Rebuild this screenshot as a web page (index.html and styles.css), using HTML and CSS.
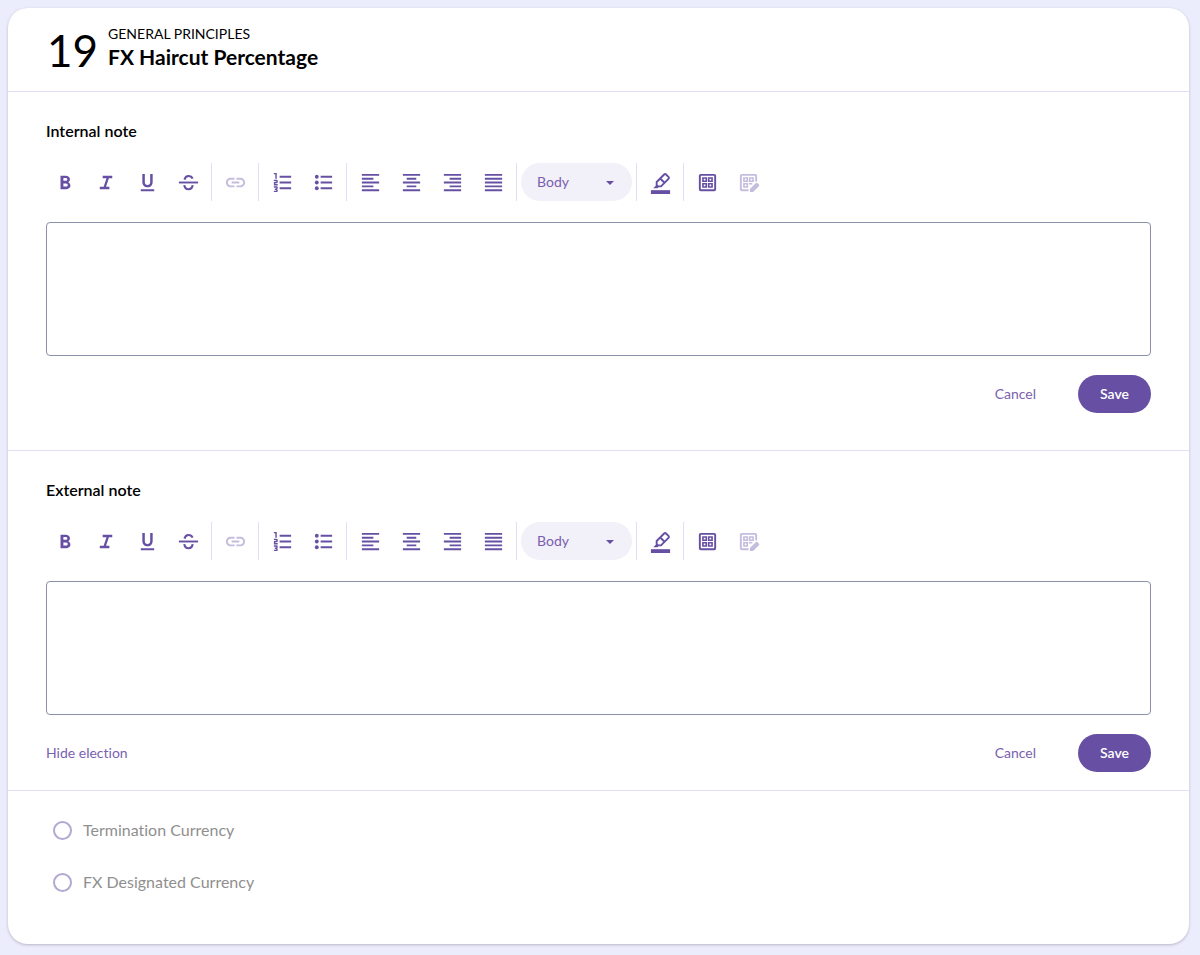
FILE: index.html
```html
<!DOCTYPE html>
<html lang="en">
<head>
    <meta charset="UTF-8">
    <meta name="viewport" content="width=device-width, initial-scale=1.0">
    <title>FX Haircut Percentage</title>
    <link rel="stylesheet" href="styles.css">
</head>
<body>

    <svg class="icon-defs" aria-hidden="true">
        <symbol id="bold" viewBox="0 0 24 24"><path d="M6.800 19V5h5.500c1.100 0 2.100.3 3 1s1.300 1.600 1.300 2.800c0 .8-.2 1.500-.6 2s-.7.800-1.100 1c.5.200 1 .6 1.500 1.200s.7 1.300.7 2.200c0 1.400-.5 2.300-1.500 2.900s-1.900.9-2.800.9H6.800zm3-2.800h2.700c.8 0 1.300-.2 1.500-.6s.3-.7.300-1-.1-.6-.3-1-.7-.6-1.500-.6H9.800v3.200zm0-5.900h2.400c.6 0 1-.1 1.300-.4s.4-.7.400-1.100-.2-.8-.5-1-.7-.4-1.200-.4H9.800v2.900z"/></symbol>
        <symbol id="italic" viewBox="0 0 24 24"><path d="M5 19v-2.500h4l3-9H8V5h10v2.500h-3.500l-3 9H15V19z"/></symbol>
        <symbol id="underline" viewBox="0 0 24 24"><path d="M5 21v-2h14v2H5zm7-4c-1.700 0-3-.5-4-1.600-.9-1-1.400-2.400-1.400-4.100V3h2.600v8.400c0 .9.200 1.700.7 2.300s1.200.8 2.100.8 1.600-.3 2.100-.8.700-1.400.7-2.300V3h2.600v8.300c0 1.700-.5 3.100-1.400 4.100-1 1.100-2.300 1.600-4 1.600z"/></symbol>
        <symbol id="strike" viewBox="0 0 24 24"><path d="M2 11h20v2H2z"/><path fill="none" stroke="currentColor" stroke-width="2.200" d="M7.800 9C8.500 6.500 10 5.200 12 5.200S15.500 6.300 16.300 8M7.600 14.800c.3 2.600 1.900 4.200 4.400 4.200s4.100-1.500 4.300-4.200"/></symbol>
        <symbol id="link" viewBox="0 0 24 24"><path d="M11 17H7c-2.800 0-5-2.200-5-5s2.200-5 5-5h4v2H7c-1.700 0-3 1.300-3 3s1.300 3 3 3h4v2zm-3-4v-2h8v2H8zm5 4v-2h4c1.700 0 3-1.300 3-3s-1.300-3-3-3h-4V7h4c2.800 0 5 2.200 5 5s-2.200 5-5 5h-4z"/></symbol>
        <symbol id="numbers" viewBox="0 0 24 24"><path d="M3 22v-1.500h2.500v-.75H4v-1.500h1.500v-.75H3V16h3q.425 0 .713.288T7 17v1q0 .425-.288.713T6 19q.425 0 .713.288T7 20v1q0 .425-.288.713T6 22H3zm0-7v-2.750q0-.425.288-.713T4 11.250h1.500v-.75H3V9h3q.425 0 .713.288T7 10v1.750q0 .425-.288.713T6 12.750H4.500v.75H7V15H3zm1.500-7V3.500H3V2h3v6H4.500zM9 19v-2h12v2H9zm0-6v-2h12v2H9zm0-6V5h12v2H9z"/></symbol>
        <symbol id="bullets" viewBox="0 0 24 24"><path d="M9 19v-2h12v2H9zm0-6v-2h12v2H9zm0-6V5h12v2H9z"/><circle cx="5" cy="6" r="2"/><circle cx="5" cy="12" r="2"/><circle cx="5" cy="18" r="2"/></symbol>
        <symbol id="left" viewBox="0 0 24 24"><path d="M3 3h18v2H3zM3 7h12v2H3zM3 11h18v2H3zM3 15h12v2H3zM3 19h18v2H3z"/></symbol>
        <symbol id="center" viewBox="0 0 24 24"><path d="M3 3h18v2H3zM7 7h10v2H7zM3 11h18v2H3zM7 15h10v2H7zM3 19h18v2H3z"/></symbol>
        <symbol id="right" viewBox="0 0 24 24"><path d="M3 3h18v2H3zM9 7h12v2H9zM3 11h18v2H3zM9 15h12v2H9zM3 19h18v2H3z"/></symbol>
        <symbol id="justify" viewBox="0 0 24 24"><path d="M3 3h18v2H3zM3 7h18v2H3zM3 11h18v2H3zM3 15h18v2H3zM3 19h18v2H3z"/></symbol>
        <symbol id="highlight" viewBox="0 0 24 24"><path d="M2 20h20v4H2z"/><path fill="none" stroke="currentColor" stroke-width="2" stroke-linejoin="round" d="M8 11.500l7.800-7.800q1-1 2 0l2.500 2.500q1 1 0 2L12.500 16H9.300L8 14.700zM11.700 7.800l4.500 4.500"/><path d="M4.500 18l3.700-4 2.300 2.300L8.800 18z"/></symbol>
        <symbol id="table" viewBox="0 0 24 24"><path fill="none" stroke="currentColor" stroke-width="2" d="M5 4h14q1 0 1 1v14q0 1-1 1H5q-1 0-1-1V5q0-1 1-1z"/><path fill="none" stroke="currentColor" stroke-width="1.700" d="M7.250 7.250h3.500v3.500h-3.500zM13.250 7.250h3.500v3.500h-3.500zM7.250 13.250h3.500v3.500h-3.500zM13.250 13.250h3.500v3.500h-3.500z"/></symbol>
        <symbol id="table-edit" viewBox="0 0 24 24"><path fill="none" stroke="currentColor" stroke-width="2" d="M20 11V5q0-1-1-1H5q-1 0-1 1v14q0 1 1 1h7"/><path fill="none" stroke="currentColor" stroke-width="1.700" d="M7.250 7.250h3.500v3.500h-3.500zM13.250 7.250h3.500v3.500h-3.500zM7.250 13.250h3.500v3.500h-3.500zM13.250 14v-.75H16"/><path d="M13.500 22v-3.300l6-6q1-1 2 0l1.300 1.300q1 1 0 2l-6 6z"/></symbol>
    </svg>

    <main class="card">
        <header class="card-header">
            <span class="number">19</span>
            <div>
                <p class="category">GENERAL PRINCIPLES</p>
                <h1>FX Haircut Percentage</h1>
            </div>
        </header>

        <section class="note">
            <h2 id="internalTitle">Internal note</h2>
            <div class="toolbar">
                <div class="group">
                    <button aria-label="Bold"><svg><use href="#bold"/></svg></button>
                    <button aria-label="Italic"><svg><use href="#italic"/></svg></button>
                    <button aria-label="Underline"><svg><use href="#underline"/></svg></button>
                    <button aria-label="Strikethrough"><svg><use href="#strike"/></svg></button>
                </div>
                <div class="group">
                    <button aria-label="Link" disabled><svg><use href="#link"/></svg></button>
                </div>
                <div class="group">
                    <button aria-label="Numbered list"><svg><use href="#numbers"/></svg></button>
                    <button aria-label="Bulleted list"><svg><use href="#bullets"/></svg></button>
                </div>
                <div class="group">
                    <button aria-label="Align left"><svg><use href="#left"/></svg></button>
                    <button aria-label="Align center"><svg><use href="#center"/></svg></button>
                    <button aria-label="Align right"><svg><use href="#right"/></svg></button>
                    <button aria-label="Justify"><svg><use href="#justify"/></svg></button>
                </div>
                <div class="group">
                    <div class="select-wrap">
                        <select aria-label="Text style">
                            <option>Body</option>
                        </select>
                    </div>
                </div>
                <div class="group">
                    <button aria-label="Highlight"><svg><use href="#highlight"/></svg></button>
                </div>
                <div class="group">
                    <button aria-label="Insert table"><svg><use href="#table"/></svg></button>
                    <button aria-label="Edit table" disabled><svg><use href="#table-edit"/></svg></button>
                </div>
            </div>
            <textarea aria-labelledby="internalTitle"></textarea>
            <div class="actions">
                <button class="text-btn">Cancel</button>
                <button class="save-btn">Save</button>
            </div>
        </section>

        <section class="note external">
            <h2 id="externalTitle">External note</h2>
            <div class="toolbar">
                <div class="group">
                    <button aria-label="Bold"><svg><use href="#bold"/></svg></button>
                    <button aria-label="Italic"><svg><use href="#italic"/></svg></button>
                    <button aria-label="Underline"><svg><use href="#underline"/></svg></button>
                    <button aria-label="Strikethrough"><svg><use href="#strike"/></svg></button>
                </div>
                <div class="group">
                    <button aria-label="Link" disabled><svg><use href="#link"/></svg></button>
                </div>
                <div class="group">
                    <button aria-label="Numbered list"><svg><use href="#numbers"/></svg></button>
                    <button aria-label="Bulleted list"><svg><use href="#bullets"/></svg></button>
                </div>
                <div class="group">
                    <button aria-label="Align left"><svg><use href="#left"/></svg></button>
                    <button aria-label="Align center"><svg><use href="#center"/></svg></button>
                    <button aria-label="Align right"><svg><use href="#right"/></svg></button>
                    <button aria-label="Justify"><svg><use href="#justify"/></svg></button>
                </div>
                <div class="group">
                    <div class="select-wrap">
                        <select aria-label="Text style">
                            <option>Body</option>
                        </select>
                    </div>
                </div>
                <div class="group">
                    <button aria-label="Highlight"><svg><use href="#highlight"/></svg></button>
                </div>
                <div class="group">
                    <button aria-label="Insert table"><svg><use href="#table"/></svg></button>
                    <button aria-label="Edit table" disabled><svg><use href="#table-edit"/></svg></button>
                </div>
            </div>
            <textarea aria-labelledby="externalTitle"></textarea>
            <div class="actions">
                <button class="text-btn hide-btn">Hide election</button>
                <button class="text-btn">Cancel</button>
                <button class="save-btn">Save</button>
            </div>
        </section>

        <div class="options">
            <label><input type="radio" name="currency"> <span>Termination Currency</span></label>
            <label><input type="radio" name="currency"> <span>FX Designated Currency</span></label>
        </div>
    </main>

</body>
</html>
```
FILE: styles.css
```css
* {
    margin: 0;
    padding: 0;
    box-sizing: border-box;
}

body {
    font-family: Lato, sans-serif;
    font-variant-ligatures: none;
    background-color: #ecedfc;
    color: #000;
    padding: 8px 11px 11px 8px;
}

button, select, textarea {
    font-family: inherit;
    font-variant-ligatures: none;
    font-size: 14px;
    border: none;
    background: none;
}

.icon-defs {
    display: none;
}

.card {
    background-color: #fff;
    border-radius: 20px;
    box-shadow: 0 1px 3px rgba(60, 50, 90, 0.3);
}

.card-header {
    display: flex;
    align-items: flex-start;
    gap: 10px;
    padding: 16px 39px 15px;
    border-bottom: 1px solid #e0dff5;
}

.number {
    font-size: 44px;
    line-height: 52px;
}

.category {
    font-size: 14px;
    line-height: 20px;
}

h1 {
    font-size: 21px;
    font-weight: 700;
    line-height: 26px;
}

.note {
    padding: 27px 38px 37px;
    border-bottom: 1px solid #e0dff5;
}

.external {
    padding-bottom: 18px;
}

h2 {
    font-size: 16px;
    font-weight: 600;
    line-height: 24px;
    margin-bottom: 20px;
}

.toolbar {
    display: flex;
    margin-bottom: 21px;
}

.group {
    display: flex;
    gap: 3px;
    padding-right: 4px;
    margin-right: 4px;
    border-right: 1px solid #e0dff5;
}

.group:last-child {
    border-right: none;
}

.group button {
    display: flex;
    align-items: center;
    justify-content: center;
    width: 38px;
    height: 38px;
    color: #6750a4;
    border-radius: 19px;
    cursor: pointer;
}

.group button:disabled {
    color: #c5bddd;
    cursor: default;
}

.group svg {
    width: 23px;
    height: 23px;
    fill: currentColor;
}

.select-wrap {
    position: relative;
    width: 111px;
}

.select-wrap select {
    appearance: none;
    width: 100%;
    height: 38px;
    padding: 0 16px 2px;
    color: #7a5fb0;
    background-color: #f2f0f8;
    border-radius: 19px;
}

.select-wrap::after {
    content: "";
    position: absolute;
    right: 18px;
    top: 18px;
    border: 4px solid transparent;
    border-top-color: #6750a4;
    border-bottom: none;
    pointer-events: none;
}

textarea {
    display: block;
    width: 100%;
    height: 134px;
    padding: 12px;
    border: 1px solid #8a90a8;
    border-radius: 4px;
    resize: none;
    margin-bottom: 19px;
}

.actions {
    display: flex;
    justify-content: flex-end;
    gap: 20px;
}

.text-btn {
    height: 38px;
    padding: 0 22px 2px;
    color: #7a5fb0;
    cursor: pointer;
}

.hide-btn {
    padding: 0 0 2px;
    margin-right: auto;
}

.save-btn {
    height: 38px;
    padding: 0 22px 2px;
    font-weight: 600;
    color: #fff;
    background-color: #6750a4;
    border-radius: 19px;
    cursor: pointer;
}

.options {
    padding: 13px 45px 36px;
}

.options label {
    display: flex;
    align-items: center;
    gap: 11px;
    height: 52px;
    font-size: 16px;
    color: #8f8f8f;
}

.options span {
    padding-bottom: 2px;
}

.options input {
    appearance: none;
    width: 19px;
    height: 19px;
    border: 2px solid #b3a8d1;
    border-radius: 50%;
}
```
